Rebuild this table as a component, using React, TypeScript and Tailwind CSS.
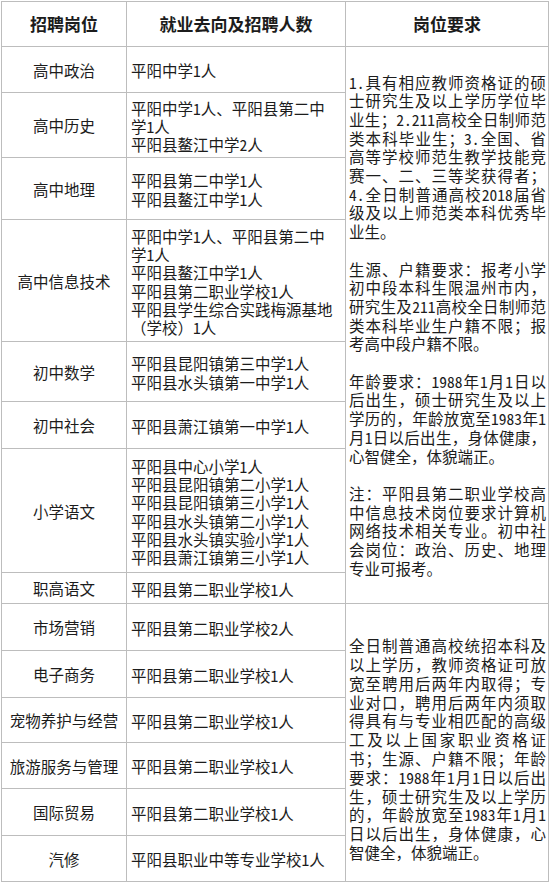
import React from "react";

type Row = { name: string; places: string[] };

const rows: Row[] = [
  { name: "高中政治", places: ["平阳中学1人"] },
  { name: "高中历史", places: ["平阳中学1人、平阳县第二中", "学1人", "平阳县鳌江中学2人"] },
  { name: "高中地理", places: ["平阳县第二中学1人", "平阳县鳌江中学1人"] },
  {
    name: "高中信息技术",
    places: [
      "平阳中学1人、平阳县第二中",
      "学1人",
      "平阳县鳌江中学1人",
      "平阳县第二职业学校1人",
      "平阳县学生综合实践梅源基地",
      "（学校）1人",
    ],
  },
  { name: "初中数学", places: ["平阳县昆阳镇第三中学1人", "平阳县水头镇第一中学1人"] },
  { name: "初中社会", places: ["平阳县萧江镇第一中学1人"] },
  {
    name: "小学语文",
    places: [
      "平阳县中心小学1人",
      "平阳县昆阳镇第二小学1人",
      "平阳县昆阳镇第三小学1人",
      "平阳县水头镇第二小学1人",
      "平阳县水头镇实验小学1人",
      "平阳县萧江镇第三小学1人",
    ],
  },
  { name: "职高语文", places: ["平阳县第二职业学校1人"] },
  { name: "市场营销", places: ["平阳县第二职业学校2人"] },
  { name: "电子商务", places: ["平阳县第二职业学校1人"] },
  { name: "宠物养护与经营", places: ["平阳县第二职业学校1人"] },
  { name: "旅游服务与管理", places: ["平阳县第二职业学校1人"] },
  { name: "国际贸易", places: ["平阳县第二职业学校1人"] },
  { name: "汽修", places: ["平阳县职业中等专业学校1人"] },
];

const block1: string[][] = [
  [
    "1.具有相应教师资格证的硕",
    "士研究生及以上学历学位毕",
    "业生；2.211高校全日制师范",
    "类本科毕业生；3.全国、省",
    "高等学校师范生教学技能竞",
    "赛一、二、三等奖获得者；",
    "4.全日制普通高校2018届省",
    "级及以上师范类本科优秀毕",
    "业生。",
  ],
  [
    "生源、户籍要求：报考小学",
    "初中段本科生限温州市内，",
    "研究生及211高校全日制师范",
    "类本科毕业生户籍不限；报",
    "考高中段户籍不限。",
  ],
  [
    "年龄要求：1988年1月1日以",
    "后出生，硕士研究生及以上",
    "学历的，年龄放宽至1983年1",
    "月1日以后出生，身体健康，",
    "心智健全，体貌端正。",
  ],
  [
    "注：平阳县第二职业学校高",
    "中信息技术岗位要求计算机",
    "网络技术相关专业。初中社",
    "会岗位：政治、历史、地理",
    "专业可报考。",
  ],
];

const block2: string[][] = [
  [
    "全日制普通高校统招本科及",
    "以上学历，教师资格证可放",
    "宽至聘用后两年内取得；专",
    "业对口，聘用后两年内须取",
    "得具有与专业相匹配的高级",
    "工及以上国家职业资格证",
    "书；生源、户籍不限；年龄",
    "要求：1988年1月1日以后出",
    "生，硕士研究生及以上学历",
    "的，年龄放宽至1983年1月1",
    "日以后出生，身体健康，心",
    "智健全，体貌端正。",
  ],
];

// wrap ASCII runs (digits, dot) so they take half-width glyphs like the original
function T({ s }: { s: string }) {
  const parts = s.split(/([0-9.]+)/);
  return (
    <>
      {parts.map((p, i) =>
        p === "" ? null : /^[0-9.]+$/.test(p) ? (
          <span key={i} className="[font-feature-settings:'hwid']">
            {p}
          </span>
        ) : (
          <React.Fragment key={i}>{p}</React.Fragment>
        )
      )}
    </>
  );
}

function Para({ lines, lh }: { lines: string[]; lh: string }) {
  return (
    <>
      {lines.map((l, i) => (
        <div
          key={i}
          className={
            "whitespace-nowrap " +
            lh +
            (i < lines.length - 1 ? " text-justify [text-align-last:justify]" : " text-left")
          }
        >
          <T s={l} />
        </div>
      ))}
    </>
  );
}

function Block1() {
  return (
    <div className="row-span-8 flex flex-col justify-center bg-white pl-[3px] pr-[2px]">
      {block1.map((p, i) => (
        <React.Fragment key={i}>
          {i > 0 && <div className="h-[18.7px]" />}
          <Para lines={p} lh="leading-[18.7px]" />
        </React.Fragment>
      ))}
    </div>
  );
}

function Block2() {
  return (
    <div className="row-span-6 flex flex-col justify-center bg-white pl-[3px] pr-[2px] pt-[13px]">
      {block2.map((p, i) => (
        <Para key={i} lines={p} lh="leading-[18.8px]" />
      ))}
    </div>
  );
}

export default function App() {
  return (
    <div className="min-h-[883px] w-[550px] bg-white pl-px pt-px font-['Noto_Sans_CJK_SC',sans-serif] text-[15.5px] text-[#1c1c1c]">
      <div className="grid w-fit grid-cols-[124px_218px_202px] grid-rows-[44px_45px_64px_61px_121px_59px_46px_123px_30px_46px_46px_44px_45px_46px_45px] gap-px bg-[#bdbdbd] p-px">
        <div className="flex items-center justify-center bg-white text-[17px] font-bold">招聘岗位</div>
        <div className="flex items-center justify-center bg-white text-[17px] font-bold">就业去向及招聘人数</div>
        <div className="flex items-center justify-center bg-white text-[17px] font-bold">岗位要求</div>
        {rows.map((r, i) => (
          <React.Fragment key={r.name}>
            <div className="flex items-center justify-center whitespace-nowrap bg-white pt-[2px]">{r.name}</div>
            <div className="flex flex-col justify-center bg-white pl-[4px] pt-[2px]">
              {r.places.map((p, j) => (
                <div key={j} className="whitespace-nowrap leading-[18.3px]">
                  <T s={p} />
                </div>
              ))}
            </div>
            {i === 0 && <Block1 />}
            {i === 8 && <Block2 />}
          </React.Fragment>
        ))}
      </div>
    </div>
  );
}
